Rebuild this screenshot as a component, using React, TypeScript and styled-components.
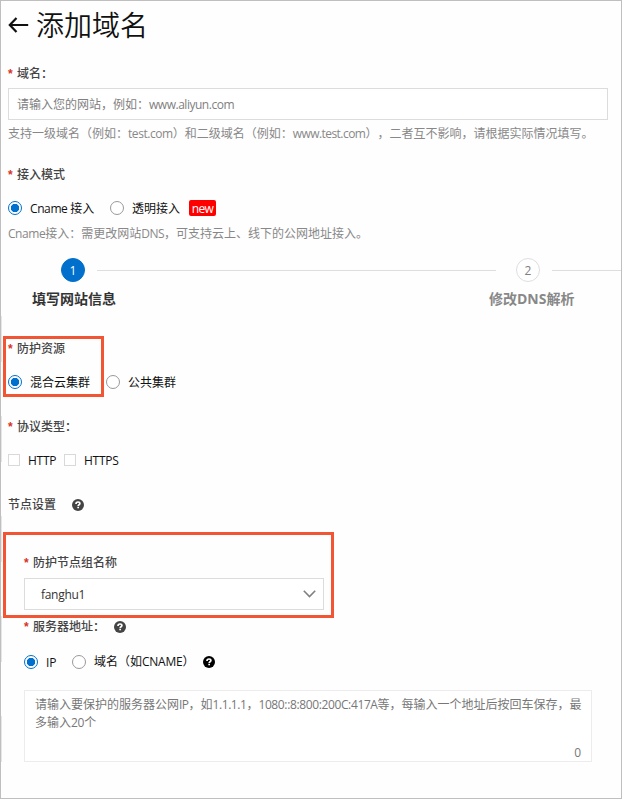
import React from "react";
import styled, { createGlobalStyle, css } from "styled-components";

const GlobalStyle = createGlobalStyle`
  *, *::before, *::after { box-sizing: border-box; }
  body {
    margin: 0;
    background: #fefefe;
    font-family: "Open Sans", "Noto Sans CJK SC", sans-serif;
    font-size: 12px;
    text-spacing-trim: space-all;
    color: #111;
  }
`;

const Page = styled.main`
  position: relative;
  display: flex;
  flex-direction: column;
  width: 622px;
  height: 799px;
  border: 1px solid #bfbfbf;
  padding: 0 0 0 7px;
  overflow: hidden;
  background: #fefefe;
`;

const EdgeMarks = styled.div`
  position: absolute;
  left: 0;
  top: 315px;
  width: 1px;
  height: 446px;
  background: repeating-linear-gradient(#e6e6e6 0 46px, transparent 46px 100px);
`;

const Header = styled.header`
  display: flex;
  align-items: center;
  height: 48px;
  gap: 7px;
`;

const Title = styled.h1`
  margin: 0;
  font-size: 28px;
  line-height: 40px;
  font-weight: 350;
  color: #111;
`;

const Label = styled.div<{ $top: number }>`
  display: flex;
  align-items: center;
  height: 18px;
  margin-top: ${(p) => p.$top}px;
  line-height: 18px;
  font-weight: 500;
  color: #444;
  white-space: nowrap;
`;

const Star = styled.span`
  width: 9px;
  color: #d93026;
  font-family: "Liberation Sans", sans-serif;
  font-size: 12px;
  font-weight: 700;
`;

const OptionRow = styled.div<{ $top: number }>`
  display: flex;
  align-items: center;
  height: 18px;
  margin-top: ${(p) => p.$top}px;
  line-height: 18px;
  white-space: nowrap;
`;

const Option = styled.label<{ $width?: number }>`
  display: flex;
  align-items: center;
  gap: 8px;
  ${(p) => p.$width && css`width: ${p.$width}px;`}
`;

const RadioDot = styled.span<{ $checked?: boolean }>`
  flex: none;
  width: 14px;
  height: 14px;
  border-radius: 50%;
  border: 1px solid ${(p) => (p.$checked ? "#0070cc" : "#999")};
  background: ${(p) =>
    p.$checked ? "radial-gradient(circle, #0070cc 0 3.9px, #fff 4.5px)" : "#fff"};
`;

const CheckSquare = styled.span`
  flex: none;
  width: 12px;
  height: 12px;
  border: 1px solid #d9d9d9;
  background: #fff;
`;

const Text = styled.span<{ $spacing?: number }>`
  letter-spacing: ${(p) => p.$spacing ?? 0}px;
`;

const OptionText = styled(Text)`
  padding-top: 2px;
  line-height: 18px;
`;

const Tag = styled.span`
  width: 27px;
  height: 16px;
  border-radius: 2px;
  background: #f00;
  color: #fff;
  line-height: 17px;
  text-align: center;
  letter-spacing: -0.6px;
`;

const DomainInput = styled.div`
  display: flex;
  align-items: center;
  width: 600px;
  height: 32px;
  margin-top: 5px;
  padding-left: 8px;
  border: 1px solid #dcdcdc;
  color: #808080;
  background: #fff;
`;

const Hint = styled.p<{ $top: number }>`
  margin: ${(p) => p.$top}px 0 0;
  height: 18px;
  line-height: 18px;
  color: #888;
  white-space: nowrap;
`;

const Steps = styled.div`
  display: grid;
  grid-template-columns: 53px 24px 12px 399px 20px 24px 12px 1fr;
  align-items: center;
  height: 24px;
  margin-top: 15px;
`;

const StepCircle = styled.span<{ $active?: boolean; $column: number }>`
  grid-column: ${(p) => p.$column};
  grid-row: 1;
  height: 24px;
  border-radius: 50%;
  border: 1px solid ${(p) => (p.$active ? "#0070cc" : "#dedede")};
  background: ${(p) => (p.$active ? "#0070cc" : "#fff")};
  color: ${(p) => (p.$active ? "#fff" : "#808080")};
  line-height: 23px;
  text-align: center;
`;

const StepLine = styled.span<{ $column: number }>`
  grid-column: ${(p) => p.$column};
  grid-row: 1;
  height: 1px;
  background: #dedede;
`;

const StepTitles = styled.div`
  display: flex;
  align-items: center;
  height: 20px;
  margin-top: 7px;
  padding-left: 24px;
  font-size: 14px;
  line-height: 20px;
  font-weight: 700;
`;

const StepTitle = styled.span<{ $active?: boolean }>`
  width: 457px;
  flex: none;
  color: ${(p) => (p.$active ? "#333" : "#888")};
  white-space: nowrap;
`;

const NodeSection = styled.section`
  display: flex;
  flex-direction: column;
  padding-left: 16px;
`;

const Select = styled.div`
  display: flex;
  align-items: center;
  justify-content: space-between;
  width: 300px;
  height: 32px;
  margin-top: 6px;
  padding: 0 7px 0 16px;
  border: 1px solid #dcdcdc;
  background: #fff;
  color: #333;
`;

const AddressBox = styled.div`
  display: flex;
  flex-direction: column;
  justify-content: space-between;
  width: 568px;
  height: 72px;
  margin-top: 19px;
  padding: 5px 10px 0;
  border: 1px solid #ececec;
  background: #fff;
  color: #777;
  line-height: 18px;
  white-space: nowrap;
`;

const Count = styled.span`
  align-self: flex-end;
  line-height: 16px;
`;

const Highlight = styled.div<{ $top: number; $width: number; $height: number }>`
  position: absolute;
  left: 2px;
  top: ${(p) => p.$top}px;
  width: ${(p) => p.$width}px;
  height: ${(p) => p.$height}px;
  border: 3px solid #f25533;
  pointer-events: none;
`;

const HelpSvg = styled.svg<{ $left: number; $color: string }>`
  flex: none;
  margin-left: ${(p) => p.$left}px;
  color: ${(p) => p.$color};
`;

function HelpIcon({ left, color = "#444" }: { left: number; color?: string }) {
  return (
    <HelpSvg $left={left} $color={color} width="12" height="12" viewBox="0 0 12 12" fill="none">
      <circle cx="6" cy="6" r="6" fill="currentColor" />
      <path
        d="M4 4.9C4 3.6 4.9 3 6 3s1.9.7 1.9 1.6c0 1.2-1.7 1.2-1.7 2.4"
        stroke="#fff"
        strokeWidth="1.7"
      />
      <path d="M5.3 7.7H7v1.6H5.3z" fill="#fff" />
    </HelpSvg>
  );
}

export default function App() {
  return (
    <>
      <GlobalStyle />
      <Page>
        <EdgeMarks />
        <Header>
          <svg width="21" height="16" viewBox="0 0 21 16" fill="none" stroke="#111" strokeWidth="2.2">
            <path d="M8.5 1 1.8 8l6.7 7M2 8h18.2" />
          </svg>
          <Title>添加域名</Title>
        </Header>

        <Label $top={16}><Star>*</Star>域名：</Label>
        <DomainInput>
          <Text>请输入您的网站，例如：</Text>
          <Text $spacing={-0.48}>www.aliyun.com</Text>
        </DomainInput>
        <Hint $top={5}>
          支持一级域名（例如：<Text $spacing={-0.45}>test.com</Text>）和二级域名（例如：<Text $spacing={-0.55}>www.test.com</Text>），二者互不影响，请根据实际情况填写。
        </Hint>

        <Label $top={23}><Star>*</Star>接入模式</Label>
        <OptionRow $top={15}>
          <Option $width={102}><RadioDot $checked /><OptionText $spacing={-0.4}>Cname <Text>接入</Text></OptionText></Option>
          <Option $width={79}><RadioDot /><OptionText>透明接入</OptionText></Option>
          <Tag>new</Tag>
        </OptionRow>
        <Hint $top={8}><Text $spacing={-0.45}>Cname</Text>接入：需更改网站<Text $spacing={-0.5}>DNS</Text>，可支持云上、线下的公网地址接入。</Hint>

        <Steps>
          <StepCircle $active $column={2}>1</StepCircle>
          <StepLine $column={4} />
          <StepCircle $column={6}>2</StepCircle>
          <StepLine $column={8} />
        </Steps>
        <StepTitles>
          <StepTitle $active>填写网站信息</StepTitle>
          <StepTitle>修改DNS解析</StepTitle>
        </StepTitles>

        <Label $top={31}><Star>*</Star>防护资源</Label>
        <OptionRow $top={15}>
          <Option $width={98}><RadioDot $checked /><OptionText>混合云集群</OptionText></Option>
          <Option><RadioDot /><OptionText>公共集群</OptionText></Option>
        </OptionRow>

        <Label $top={27}><Star>*</Star>协议类型：</Label>
        <OptionRow $top={15}>
          <Option $width={56}><CheckSquare /><OptionText $spacing={-0.25}>HTTP</OptionText></Option>
          <Option><CheckSquare /><OptionText $spacing={-0.25}>HTTPS</OptionText></Option>
        </OptionRow>

        <Label $top={27}>节点设置<HelpIcon left={16} /></Label>

        <NodeSection>
          <Label $top={40}><Star>*</Star>防护节点组名称</Label>
          <Select>
            <OptionText $spacing={-0.3}>fanghu1</OptionText>
            <svg width="13" height="8" viewBox="0 0 13 8" fill="none" stroke="#808080" strokeWidth="1.6">
              <path d="m.8.8 5.7 5.7L12.2.8" />
            </svg>
          </Select>
          <Label $top={8}><Star>*</Star>服务器地址：<HelpIcon left={9} /></Label>
          <OptionRow $top={17}>
            <Option $width={48}><RadioDot $checked /><OptionText $spacing={-0.2}>IP</OptionText></Option>
            <Option $width={131}><RadioDot /><Text>域名（如<Text $spacing={-0.25}>CNAME</Text>）</Text></Option>
            <HelpIcon left={0} color="#000" />
          </OptionRow>
          <AddressBox>
            <div>
              请输入要保护的服务器公网<Text $spacing={-0.5}>IP</Text>，如<Text $spacing={-0.45}>1.1.1.1</Text>，<Text $spacing={-0.37}>1080::8:800:200C:417A</Text>等，每输入一个地址后按回车保存，最
              <br />
              多输入<Text $spacing={-0.3}>20</Text>个
            </div>
            <Count>0</Count>
          </AddressBox>
        </NodeSection>

        <Highlight $top={335} $width={101} $height={61} />
        <Highlight $top={531} $width={331} $height={86} />
      </Page>
    </>
  );
}
